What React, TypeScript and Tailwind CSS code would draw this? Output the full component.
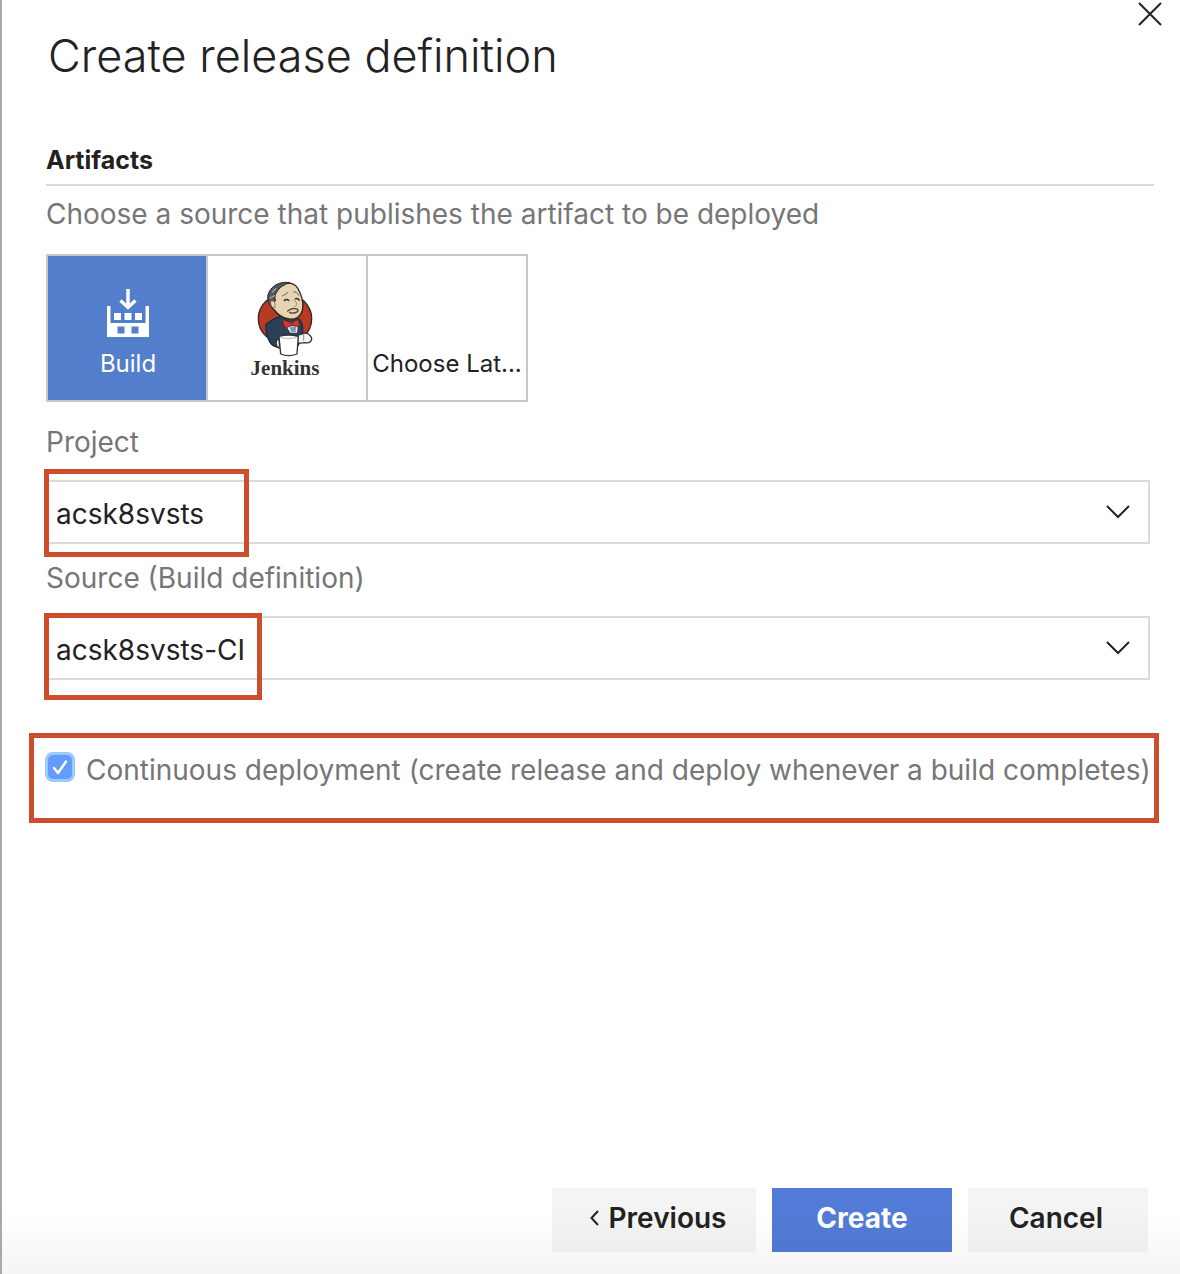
import { useState } from "react";

function CloseIcon() {
  return (
    <svg width="24" height="24" viewBox="0 0 24 24" fill="none" stroke="#222" strokeWidth="2" aria-hidden="true">
      <path d="M1 1L23 23M23 1L1 23" />
    </svg>
  );
}

function ChevronDown() {
  return (
    <svg
      className="pointer-events-none absolute top-[25px] right-5"
      width="24"
      height="14"
      viewBox="0 0 24 14"
      fill="none"
      stroke="#222"
      strokeWidth="2"
      aria-hidden="true"
    >
      <path d="M1 1L12 12L23 1" />
    </svg>
  );
}

function BuildIcon() {
  return (
    <svg width="42" height="48" viewBox="0 0 42 48" fill="none" aria-hidden="true">
      <path d="M21 0V18M13.5 11.5L21 18.5L28.5 11.5" stroke="#fff" strokeWidth="3.4" />
      <path
        fill="#fff"
        fillRule="evenodd"
        d="M0 17H3.5V34H38.500V17H42V48H0ZM10.500 37.500V44.500H17.500V37.500ZM24.500 37.500V44.500H31.500V37.500Z"
      />
      <path fill="#fff" d="M7 24H14V31H7ZM17.500 24H24.500V31H17.500ZM28 24H35V31H28Z" />
    </svg>
  );
}

function JenkinsButler() {
  return (
    <svg width="60" height="78" viewBox="60 30 180 234" strokeLinejoin="round" strokeLinecap="round" aria-hidden="true">
      <ellipse cx="150" cy="146" rx="80" ry="75" fill="#b73a25" stroke="#3a2522" strokeWidth="4" />
      <path
        d="M93 164C106 150 128 142 140 136L192 148C202 158 205 172 202 190L190 226L134 232C122 232 110 230 103 214C96 198 92 182 93 164Z"
        fill="#2c405a"
        stroke="#1d2a3b"
        strokeWidth="4"
      />
      <path d="M150 162L190 158L186 188L166 188Z" fill="#e4e8ee" />
      <path d="M164 172L184 168L182 186H168Z" fill="#7f9bb6" />
      <path
        d="M118 58C134 36 174 32 188 54C198 72 206 96 203 116C199 140 182 150 162 147C142 144 128 134 118 120C106 114 104 88 118 58Z"
        fill="#e6d4b3"
        stroke="#2b2622"
        strokeWidth="4"
      />
      <path
        d="M164 38C132 32 104 50 98 78C98 94 102 104 110 112C110 102 114 94 122 92C118 82 120 74 124 68C132 52 146 44 164 38Z"
        fill="#55555a"
        stroke="#27272a"
        strokeWidth="3"
      />
      <path d="M112 66L122 56M106 84L118 77" stroke="#a5a5a8" strokeWidth="4" />
      <path d="M107 94C116 89 123 98 119 113C112 115 105 106 107 94Z" fill="#e6d4b3" stroke="#5e5044" strokeWidth="2" />
      <path d="M142 78C148 74 154 74 158 67M176 66C182 64 188 68 190 75" stroke="#6b5a4b" strokeWidth="3" fill="none" />
      <path d="M148 91Q155 86 161 91M182 86Q188 84 192 90" stroke="#32302e" strokeWidth="5" fill="none" />
      <path d="M176 90C186 96 190 106 180 109" stroke="#9d806a" strokeWidth="3" fill="none" />
      <path d="M158 123Q172 112 184 117Q192 119 188 125Q174 133 164 127" stroke="#554238" strokeWidth="4" fill="none" />
      <path
        d="M142 148L168 158L190 148L194 170L172 166L150 174Z"
        fill="#cf3c31"
        stroke="#6b211e"
        strokeWidth="3"
      />
      <circle cx="170" cy="161" r="6" fill="#a52b25" />
      <path d="M188 196L206 190C216 188 228 194 230 206C230 216 222 220 210 218L188 220Z" fill="#f4f4f4" stroke="#333" strokeWidth="4" />
      <path d="M206 194V211" stroke="#888" strokeWidth="3" />
      <path d="M130 206C120 212 121 230 132 234" stroke="#333" strokeWidth="4" fill="#eee" />
      <path d="M132 199Q160 191 190 199L186 252Q161 262 137 252Z" fill="#fff" stroke="#333" strokeWidth="4" />
      <path d="M138 203Q160 209 184 203" stroke="#b5b5b5" strokeWidth="3" fill="none" />
    </svg>
  );
}

function Field({
  id,
  label,
  value,
  markClass,
}: {
  id: string;
  label: string;
  value: string;
  markClass: string;
}) {
  return (
    <div className="mr-1">
      <label htmlFor={id} className="block leading-10 text-[#767676]">
        {label}
      </label>
      <div className="relative mt-[18px]">
        <select
          id={id}
          defaultValue={value}
          className="block h-16 w-full appearance-none rounded-none border-2 border-[#dadada] bg-white pt-1 pr-14 pb-0 pl-2 text-[#222]"
        >
          <option>{value}</option>
        </select>
        <ChevronDown />
        <div className={markClass} />
      </div>
    </div>
  );
}

export default function App() {
  const [source, setSource] = useState("build");
  const [continuous, setContinuous] = useState(true);
  const selected = "bg-[#527ecb] text-white";

  return (
    <div
      role="dialog"
      aria-labelledby="dialog-title"
      className="relative flex min-h-screen flex-col border-l-2 border-[#a9a9a9] bg-white pr-[26px] pl-11 font-['Inter',sans-serif] text-[28px] text-[#222]"
    >
      <button type="button" aria-label="Close" className="absolute top-0.5 right-[18px]">
        <CloseIcon />
      </button>

      <h1 id="dialog-title" className="mt-6 pl-0.5 text-[45px] leading-[64px] font-light">
        Create release definition
      </h1>

      <main className="mt-14 flex-1">
        <h2 className="border-b-2 border-[#dadada] pb-2 text-[25px] leading-8 font-bold">Artifacts</h2>
        <p className="mt-2 leading-10 text-[#767676]">Choose a source that publishes the artifact to be deployed</p>

        <div className="mt-5 mb-5 flex w-fit divide-x-2 divide-[#c8c8c8] border-2 border-[#c8c8c8] text-2xl leading-8">
          <button
            type="button"
            aria-pressed={source === "build"}
            onClick={() => setSource("build")}
            className={`flex h-36 w-40 flex-col items-center justify-end pb-5 pl-0.5 ${source === "build" ? selected : ""}`}
          >
            <BuildIcon />
            <span className="mt-[11px]">Build</span>
          </button>
          <button
            type="button"
            aria-pressed={source === "jenkins"}
            onClick={() => setSource("jenkins")}
            className="flex h-36 w-40 flex-col items-center justify-end pr-1 pb-[22px]"
          >
            <JenkinsButler />
            <span className="font-['Liberation_Serif',serif] text-[21px] leading-5 font-bold text-[#333]">Jenkins</span>
          </button>
          <button
            type="button"
            aria-pressed={source === "later"}
            onClick={() => setSource("later")}
            className="flex h-36 w-[158px] flex-col items-center justify-end pb-5"
          >
            <span className="whitespace-nowrap">Choose Lat...</span>
          </button>
        </div>

        <Field
          id="project"
          label="Project"
          value="acsk8svsts"
          markClass="pointer-events-none absolute -top-[11px] -left-0.5 h-[88px] w-[205px] border-[5px] border-[#cc4e2d]"
        />
        <div className="h-[14px]" />
        <Field
          id="source"
          label="Source (Build definition)"
          value="acsk8svsts-CI"
          markClass="pointer-events-none absolute -top-[3px] -left-0.5 h-[87px] w-[218px] border-[5px] border-[#cc4e2d]"
        />

        <div className="mt-[53px] -mr-[5px] -ml-[17px] flex h-[90px] items-start border-[5px] border-[#cc4e2d] pt-3 pl-[11px]">
          <span className="relative mt-0.5 mr-[11px] h-[30px] w-[30px] shrink-0">
            <input
              id="continuous"
              type="checkbox"
              checked={continuous}
              onChange={(e) => setContinuous(e.target.checked)}
              className="block h-[30px] w-[30px] appearance-none rounded-lg border-[3px] border-[#9ccafa] checked:bg-[#659bfb]"
            />
            {continuous && (
              <svg
                className="pointer-events-none absolute inset-0"
                width="30"
                height="30"
                viewBox="0 0 30 30"
                fill="none"
                stroke="#fff"
                strokeWidth="2.4"
                strokeLinecap="round"
                strokeLinejoin="round"
                aria-hidden="true"
              >
                <path d="M9 16L13 21L21 9.500" />
              </svg>
            )}
          </span>
          <label htmlFor="continuous" className="leading-10 whitespace-nowrap text-[#767676]">
            Continuous deployment (create release and deploy whenever a build completes)
          </label>
        </div>
      </main>

      <footer className="mr-1.5 mb-[22px] flex justify-end gap-4 font-semibold">
        <button type="button" className="flex h-16 w-51 items-center justify-center gap-2.5 bg-[#f4f4f4] pb-1 pl-2">
          <svg width="9" height="16" viewBox="0 0 9 16" fill="none" stroke="#222" strokeWidth="2" aria-hidden="true">
            <path d="M8 1L1.500 8L8 15" />
          </svg>
          Previous
        </button>
        <button type="submit" className="h-16 w-45 bg-[#527bd7] pb-1 font-bold text-white">
          Create
        </button>
        <button type="button" className="h-16 w-45 bg-[#f4f4f4] pr-1 pb-1">
          Cancel
        </button>
      </footer>
      <div className="pointer-events-none absolute inset-x-0 bottom-0 h-16 bg-linear-to-b from-transparent to-black/4" />
    </div>
  );
}
